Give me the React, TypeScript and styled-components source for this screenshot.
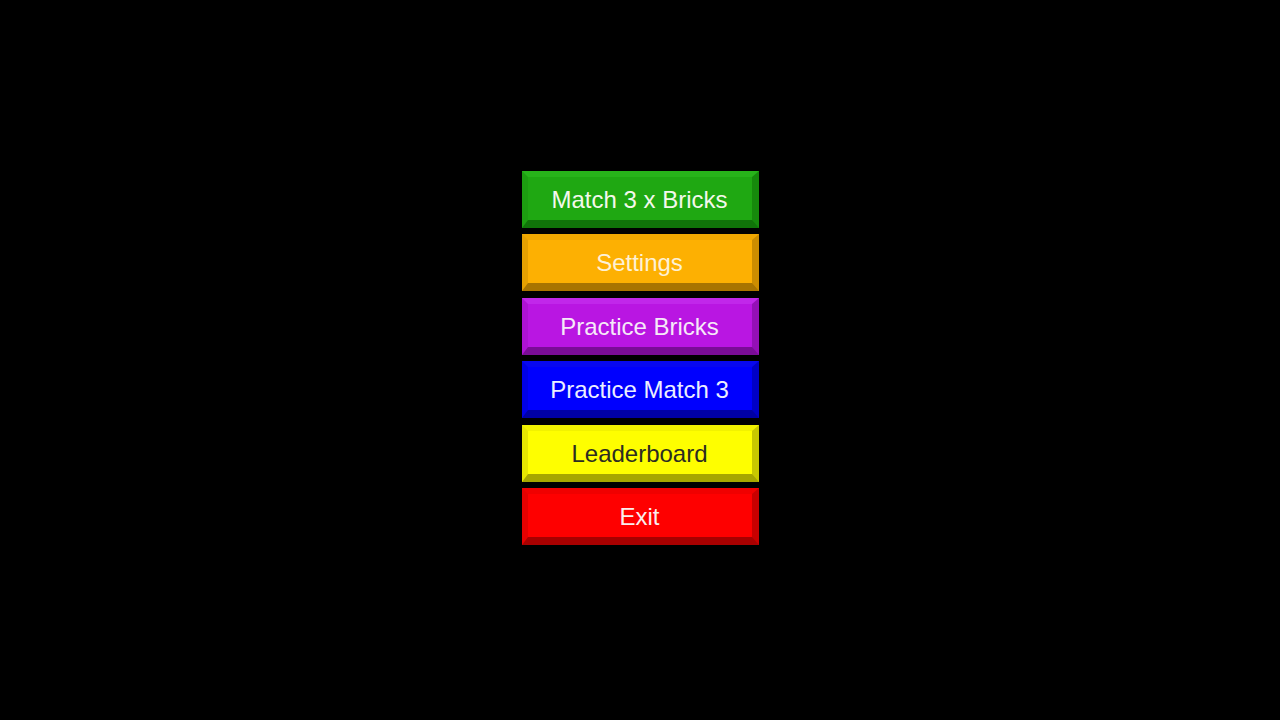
import styled, { createGlobalStyle } from 'styled-components';

const GlobalStyle = createGlobalStyle`
  html, body {
    margin: 0;
    padding: 0;
    background: #000;
  }
`;

type Tone = {
  face: string;
  top: string;
  left: string;
  right: string;
  bottom: string;
  text: string;
};

const tones: Record<string, Tone> = {
  green: { face: '#1fa812', top: '#27b41a', left: '#1c9e10', right: '#168a0c', bottom: '#107409', text: '#f4f8ec' },
  orange: { face: '#fdb002', top: '#f0a700', left: '#e6a000', right: '#cc8d00', bottom: '#a87400', text: '#fdf1d6' },
  purple: { face: '#b916e2', top: '#c127ea', left: '#ad12d4', right: '#9410b6', bottom: '#7a0c96', text: '#f6e9f8' },
  blue: { face: '#0000fe', top: '#0808f0', left: '#0000e6', right: '#0000c6', bottom: '#0000a4', text: '#ecefff' },
  yellow: { face: '#fefe00', top: '#f2f200', left: '#e6e600', right: '#c8c800', bottom: '#a6a600', text: '#2c2c22' },
  red: { face: '#fe0000', top: '#f00000', left: '#e60000', right: '#c80000', bottom: '#a80000', text: '#fbeeee' },
};

const Screen = styled.div`
  width: 100vw;
  height: 100vh;
  display: flex;
  align-items: center;
  justify-content: center;
  padding-bottom: 4px;
  box-sizing: border-box;
`;

const Menu = styled.div`
  display: flex;
  flex-direction: column;
  gap: 6.4px;
  width: 237px;
`;

const Brick = styled.button<{ $tone: Tone }>`
  height: 57px;
  width: 100%;
  box-sizing: border-box;
  margin: 0;
  padding: 3px 0 0;
  display: flex;
  align-items: center;
  justify-content: center;
  background: ${(p) => p.$tone.face};
  border-style: solid;
  border-width: 6px 7px 8px 6px;
  border-color: ${(p) => `${p.$tone.top} ${p.$tone.right} ${p.$tone.bottom} ${p.$tone.left}`};
  color: ${(p) => p.$tone.text};
  font-family: 'Liberation Sans', Arial, sans-serif;
  font-size: 24px;
  cursor: pointer;
`;

const items: { label: string; tone: string }[] = [
  { label: 'Match 3 x Bricks', tone: 'green' },
  { label: 'Settings', tone: 'orange' },
  { label: 'Practice Bricks', tone: 'purple' },
  { label: 'Practice Match 3', tone: 'blue' },
  { label: 'Leaderboard', tone: 'yellow' },
  { label: 'Exit', tone: 'red' },
];

const App = () => (
  <>
    <GlobalStyle />
    <Screen>
      <Menu>
        {items.map((item) => (
          <Brick key={item.label} $tone={tones[item.tone]}>
            {item.label}
          </Brick>
        ))}
      </Menu>
    </Screen>
  </>
);

export default App;
